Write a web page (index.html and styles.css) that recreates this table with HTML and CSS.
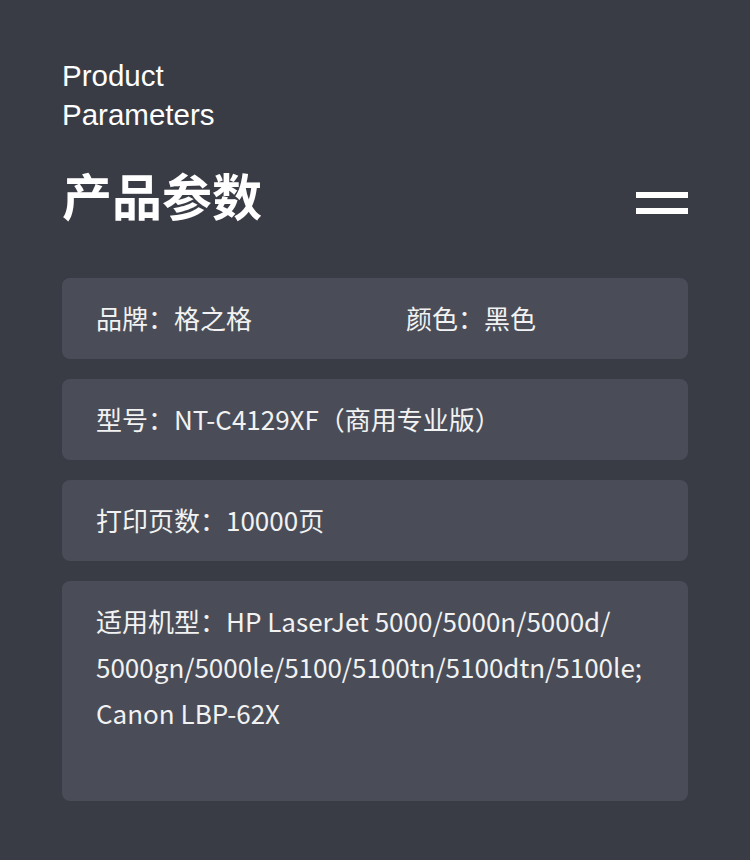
FILE: index.html
```html
<!DOCTYPE html>
<html>
    <head>
        <meta charset="utf-8">
        <link rel="stylesheet" href="styles.css">
    </head>
    <body>
        <div class="page">
            <div class="title-en">Product<br>Parameters</div>
            <div class="title-row">
                <h1 class="title-cn">产品参数</h1>
                <div class="menu">
                    <span class="bar"></span>
                    <span class="bar"></span>
                </div>
            </div>

            <div class="card two-col">
                <div>品牌：格之格</div>
                <div>颜色：黑色</div>
            </div>
            <div class="card">型号：NT-C4129XF（商用专业版）</div>
            <div class="card">打印页数：10000页</div>
            <div class="card tall">适用机型：HP LaserJet 5000/5000n/5000d/<br>5000gn/5000le/5100/5100tn/5100dtn/5100le;<br>Canon LBP-62X</div>
        </div>
    </body>
</html>
```
FILE: styles.css
```css
body {
    margin: 0;
    background-color: #393c45;
}

.page {
    padding: 56px 62px 40px 62px;
    min-height: 860px;
    box-sizing: border-box;
}

    /*headers*/

.title-en {
    font-family: "Liberation Sans", Arial, sans-serif;
    font-size: 29.5px;
    line-height: 39px;
    color: #ffffff;
}

.title-row {
    display: flex;
    justify-content: space-between;
    align-items: flex-start;
    margin-top: 30px;
    margin-bottom: 54px;
}

h1.title-cn {
    margin: 0;
    font-family: "Noto Sans CJK SC", sans-serif;
    font-size: 50px;
    line-height: 60px;
    font-weight: bold;
    color: #ffffff;
}

.menu {
    display: flex;
    flex-direction: column;
    gap: 10px;
    margin-top: 28px;
}

.bar {
    display: block;
    width: 52px;
    height: 6px;
    background-color: #ffffff;
}

    /*parameter cards*/

.card {
    background-color: #4a4d58;
    border-radius: 8px;
    padding: 17px 34px 18px 34px;
    margin-bottom: 20px;
    font-family: "Noto Sans CJK SC", sans-serif;
    font-size: 26px;
    line-height: 46px;
    color: #f2f2f2;
    white-space: nowrap;
}

.two-col {
    display: grid;
    grid-template-columns: 310px auto;
}

.tall {
    height: 220px;
    box-sizing: border-box;
}
```
